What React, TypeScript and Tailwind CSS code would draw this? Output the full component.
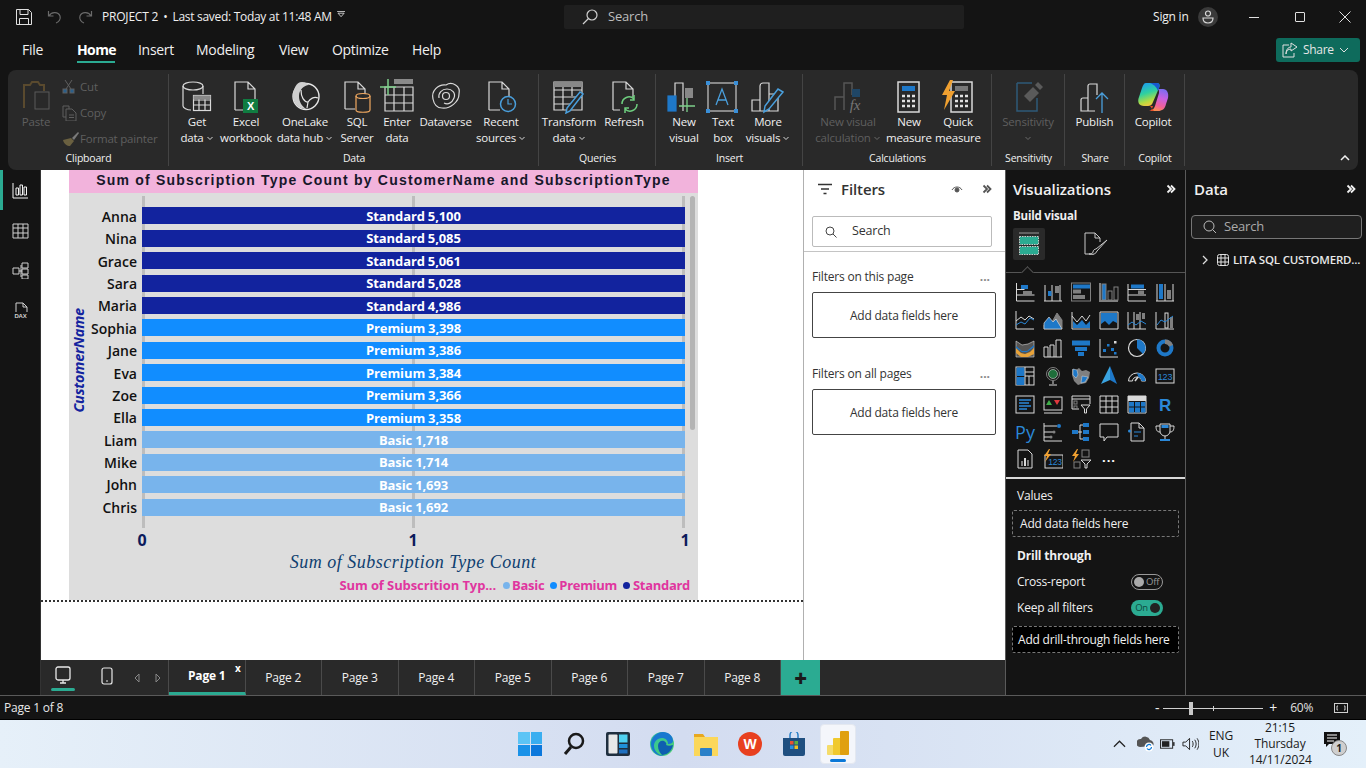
import React from "react";

const W = "#d9d9d9";
const B = "#2b88d8";
const F = "#1e78c8";
const G = "#808080";

function V({ children, className = "" }: { children?: React.ReactNode; className?: string }) {
  return (
    <svg viewBox="0 0 20 20" className={"h-5 w-5 " + className} fill="none" stroke={W} strokeWidth="1">
      {children}
    </svg>
  );
}

const viz: React.ReactNode[] = [
  <V><path d="M1.5 1v18h18M1.5 7.5h8M1.5 13h18" /><rect x="6" y="3" width="7" height="4" fill={F} stroke="none" /><rect x="8" y="9" width="9" height="4" fill={G} stroke="none" /></V>,
  <V><path d="M1 19h18M2 3v16M9 3v16M17 3v16" /><rect x="5" y="9" width="3.5" height="5" fill={F} stroke="none" /><rect x="12" y="4" width="4" height="7" fill={G} stroke="none" /></V>,
  <V><rect x="0.5" y="1" width="19" height="18" stroke={G} /><rect x="2" y="2.5" width="17" height="4" fill={F} stroke="none" /><rect x="2" y="7.5" width="8" height="4" fill={G} stroke="none" /><rect x="2" y="13" width="12" height="4" fill={G} stroke="none" /></V>,
  <V><path d="M1 1v18h18" stroke={G} strokeWidth="2" /><rect x="3" y="2" width="4" height="16" fill={F} stroke={G} /><rect x="9" y="9" width="4" height="9" stroke={G} /><rect x="15" y="5" width="4" height="13" stroke={G} /></V>,
  <V><path d="M1 2v17h18M1 7.5h18M1 13h18" /><rect x="4" y="2.5" width="13" height="4" fill={F} stroke="none" /><rect x="11" y="8.5" width="6" height="4" fill={G} stroke="none" /></V>,
  <V><path d="M1 19h18M2 2v17M10 2v17M18 2v17" /><rect x="4" y="2" width="4" height="15" fill={F} stroke="none" /><rect x="12" y="8" width="4" height="9" fill={G} stroke="none" /></V>,

  <V><path d="M1 1v18h18" /><path d="M1 11l5-4 4 3 4-4 5 3" stroke={W} /><path d="M1 15l5-3 4 2 5-6 4 2" stroke={B} /></V>,
  <V><path d="M1 15l5-6 3 3 5-9 5 7v9H1z" fill={G} stroke={G} /><path d="M1 19v-6l5-6 4 5 3-3 6 10z" fill={F} stroke={W} strokeWidth="0.7" /></V>,
  <V><path d="M1 2v17h18M1 6l5 6 5-6 4 5 4-6" stroke={W} /><path d="M2 11l4 4 5-5 4 5 4-4v7H2z" fill={F} stroke="none" /></V>,
  <V><path d="M1 2h18v17H1z" stroke={W} /><path d="M2 3h16v10l-4-2-4 4-4-4-4 3z" fill={F} stroke="none" /></V>,
  <V><path d="M1 2v17h18M7 2v17M13 2v17" /><rect x="9" y="4" width="3" height="6" fill={G} stroke="none" /><rect x="15" y="3" width="3" height="6" fill={G} stroke="none" /><path d="M1 15l4-3 4 3 5-4 5 3" stroke={B} /></V>,
  <V><path d="M1 2v17h18" /><rect x="10" y="3" width="3" height="15" stroke={W} /><rect x="15" y="7" width="3" height="11" fill={G} stroke="none" /><path d="M2 15l4-5 4 2 8-6" stroke={B} /></V>,

  <V><path d="M1 3l6 4 6-1 6-3v16H1z" fill="#555" stroke={W} strokeWidth="0.6" /><path d="M1 10l5 5 4 1 5-2 4-4v6l-6 3H6l-5-4z" fill="#e8a33a" stroke="none" /><path d="M1 8l6 5h5l7-6v2l-7 5H7L1 10z" fill={F} stroke="none" /></V>,
  <V><path d="M1 19V9h4v10M1 19h18M7 19V7h4v12M13 19V2h5v17" stroke={W} /></V>,
  <V><rect x="1" y="2.5" width="18" height="5" fill={F} stroke="none" /><rect x="4" y="9" width="12" height="4" fill={F} stroke="none" /><rect x="7" y="14" width="6" height="4" fill={F} stroke="none" /></V>,
  <V><path d="M1 1v18h18" /><rect x="4" y="11" width="3" height="3" fill={F} stroke="none" /><rect x="8" y="6" width="2.5" height="2.5" fill={F} stroke="none" /><rect x="12" y="10" width="3" height="3" fill={F} stroke="none" /><rect x="15" y="3" width="2.5" height="2.5" fill={W} stroke="none" /><rect x="15" y="14" width="2.5" height="2.5" fill={F} stroke="none" /></V>,
  <V><circle cx="10" cy="10" r="8.5" stroke={W} strokeWidth="1.2" /><path d="M10 10V1.5a8.5 8.5 0 0 1 6 14.5z" fill={F} stroke="none" /></V>,
  <V><circle cx="10" cy="10" r="6.5" stroke={F} strokeWidth="4" /><path d="M10 1.5a8.5 8.5 0 0 1 8 5.5l-4 1.5a4 4 0 0 0-4-2.5z" fill={G} stroke="none" /></V>,

  <V><rect x="1" y="1" width="18" height="18" /><rect x="1.5" y="1.5" width="8" height="8.5" fill={F} stroke="none" /><rect x="1.5" y="11" width="8" height="8" fill={F} stroke="none" /><path d="M10 1v18M14 10v9M10 6h9M10 10h9" /></V>,
  <V><circle cx="10" cy="8" r="6.5" stroke={G} /><circle cx="10" cy="8" r="4.5" fill="#1e6e3a" stroke={W} strokeWidth="0.6" /><path d="M10 15v3M6 19h8" /></V>,
  <V><path d="M1 3l4 1 3-2 3 3 4-1 4 2-1 6-3 5-5 1-3 1-4-4-2-6z" fill={G} stroke="none" /><path d="M2 3l4 1 1 5-2 3-3-3z M11 10l6 1-3 5-4 1z" fill={F} stroke={W} strokeWidth="0.5" /></V>,
  <svg viewBox="0 0 20 20" className="h-5 w-5"><path d="M11 0l7 18-7-4z" fill="#1e78c8" /><path d="M11 0v14l-9 4z" fill="#3aa3e0" /></svg>,
  <V><path d="M1.5 15a8.5 8 0 0 1 17 0h-4a4.5 4 0 0 0-9 0z" stroke={W} /><path d="M10 7a8.5 8 0 0 1 8.5 8h-4a4.5 4 0 0 0-3-3.7z" fill={F} stroke="none" /><path d="M8 15l3-4" strokeWidth="1.5" /></V>,
  <V><rect x="1" y="3" width="18" height="14" /><text x="10" y="14" textAnchor="middle" fontSize="9" fill={B} stroke="none" fontFamily="Liberation Sans">123</text></V>,

  <V><rect x="1" y="2" width="18" height="17" /><path d="M4 6h12M4 9h10M4 12h12M4 15h8" stroke={B} strokeWidth="1.3" /></V>,
  <V><rect x="1" y="3" width="18" height="13" /><path d="M1 19h18" /><path d="M6 6l3 5H3z" fill="#3fae49" stroke="none" /><path d="M11 6h6l-3 5z" fill="#e0393e" stroke="none" /></V>,
  <V><path d="M1 15V2h18v8M1 5h18M1 15h7" /><rect x="3" y="7" width="3" height="3" stroke={G} /><rect x="3" y="12" width="3" height="3" stroke={G} /><path d="M10 11h9l-3.5 4v4h-2v-4z" fill="#141414" /></V>,
  <V><path d="M1 2h18v17H1zM1 7h18M1 13h18M7 2v17M13 2v17" stroke={W} /></V>,
  <V><path d="M1 2h18v17H1z" stroke={W} /><path d="M1 2h18v5H1z" fill={W} stroke="none" /><rect x="2" y="8" width="5" height="4.5" fill={F} stroke="none" /><rect x="8" y="8" width="5" height="4.5" fill={F} stroke="none" /><rect x="14" y="8" width="4.5" height="4.5" fill={F} stroke="none" /><rect x="2" y="13.500" width="5" height="5" fill={F} stroke="none" /><rect x="8" y="13.500" width="5" height="5" fill={F} stroke="none" /><rect x="14" y="13.500" width="4.500" height="5" fill={F} stroke="none" /></V>,
  <V><text x="10" y="17" textAnchor="middle" fontSize="17" fontWeight="700" fill={B} stroke="none" fontFamily="Liberation Sans">R</text></V>,

  <div className="text-[18px] leading-none text-[#2b88d8] tracking-[0px] -mt-[1px]">Py</div>,
  <V><path d="M1 1v18h18M1 4h13M1 10h9M1 15h6" /><circle cx="16" cy="4" r="2" fill={F} stroke="none" /><circle cx="11" cy="10" r="1.5" fill={G} stroke="none" /><circle cx="8" cy="15" r="1.500" fill={G} stroke="none" /></V>,
  <V><rect x="1" y="8" width="6" height="4" fill={F} stroke="none" /><path d="M7 10h4M9 3v14M9 3h3M9 17h3" stroke={W} /><rect x="12" y="1" width="6" height="4" fill={F} stroke="none" /><rect x="12" y="8" width="6" height="4" fill={F} stroke="none" /><rect x="12" y="15" width="6" height="4" fill={F} stroke="none" /></V>,
  <V><path d="M1 2h18v13H8l-3 4v-4H1z" stroke={W} /></V>,
  <V><path d="M4 1h8l5 5v13H4z" stroke={W} /><path d="M12 1v5h5" /><circle cx="2.500" cy="9" r="1.500" fill={B} stroke="none" /><path d="M7 10h7M7 14h4" stroke={B} /></V>,
  <V><path d="M5 2h10v7a5 5 0 0 1-10 0z" stroke={W} /><path d="M5 4H1c0 4 1 6 4 6M15 4h4c0 4-1 6-4 6M10 14v3" /><rect x="5" y="17" width="10" height="2" fill={B} stroke="none" /><rect x="6.500" y="3" width="7" height="3" fill={B} stroke="none" /></V>,

  <V><path d="M3 1h10l4 4v14H3z" stroke={W} /><rect x="6" y="12" width="2" height="5" fill={G} stroke="none" /><rect x="9" y="9" width="2" height="8" fill={W} stroke="none" /><rect x="12" y="11" width="2" height="6" fill={G} stroke="none" /></V>,
  <V><rect x="2" y="6" width="18" height="13" /><text x="12" y="16" textAnchor="middle" fontSize="8.500" fill={B} stroke="none" fontFamily="Liberation Sans">123</text><path d="M6 0L1 7h3l-2 6 6-8H5l2-5z" fill="#f0a030" stroke="none" /></V>,
  <V><path d="M6 0L1 7h3l-2 6 6-8H5l2-5z" fill="#f0a030" stroke="none" /><rect x="11" y="1" width="7" height="7" stroke={G} /><rect x="3" y="13" width="6" height="6" stroke={G} /><path d="M10 11h10l-4 4v4h-2v-4z" stroke={W} /></V>,
  <div className="text-[13px] leading-none font-bold text-white tracking-[1px] pb-1">...</div>,
];

function Ic({ children, className = "h-[34px] w-[34px]" }: { children?: React.ReactNode; className?: string }) {
  return (
    <svg viewBox="0 0 34 34" className={className} fill="none" stroke="#d9d9d9" strokeWidth="1.2">
      {children}
    </svg>
  );
}

const Bars = ({ c = "#d9d9d9" }: { c?: string }) => <path d="M1 31V20h8v11zM9 31V6a3 3 0 0 1 3-3h6v28M18 14h9v17H1" stroke={c} />;

function Rb({ w, icon, a, b, caret, dim }: { w: string; icon: React.ReactNode; a: string; b?: string; caret?: boolean; dim?: boolean }) {
  return (
    <div className={"flex flex-col items-center shrink-0 " + w}>
      <div className="h-[35px] flex items-start justify-center pt-[1px]">{icon}</div>
      <div className={"h-[16px] leading-[16px] whitespace-nowrap " + (dim ? "text-[#5f5f5f]" : "text-[#f0f0f0]")}>{a}</div>
      <div className={"h-[16px] leading-[16px] whitespace-nowrap flex items-center gap-[2px] " + (dim ? "text-[#5f5f5f]" : "text-[#f0f0f0]")}>
        {b}
        {caret && (
          <svg viewBox="0 0 8 5" className="h-[5px] w-[8px]" fill="none" stroke={dim ? "#6a6a6a" : "#d9d9d9"}>
            <path d="M1.500 1l2.500 2.500L6.500 1" />
          </svg>
        )}
      </div>
    </div>
  );
}

function Group({ w, name, children, pl = "pl-0" }: { w: string; name: string; children: React.ReactNode; pl?: string }) {
  return (
    <div className={"relative flex flex-col shrink-0 h-full " + w}>
      <div className={"flex h-[80px] pt-[9px] " + pl}>{children}</div>
      <div className="text-center text-[10.5px] leading-[14px] text-[#f0f0f0] mt-[1px]">{name}</div>
      <div className="absolute right-0 top-[4px] bottom-[4px] w-px bg-[#444]" />
    </div>
  );
}

const rows: [string, string, string, string][] = [
  ["Anna", "Standard", "5,100", "bg-[#12239e]"],
  ["Nina", "Standard", "5,085", "bg-[#12239e]"],
  ["Grace", "Standard", "5,061", "bg-[#12239e]"],
  ["Sara", "Standard", "5,028", "bg-[#12239e]"],
  ["Maria", "Standard", "4,986", "bg-[#12239e]"],
  ["Sophia", "Premium", "3,398", "bg-[#118dff]"],
  ["Jane", "Premium", "3,386", "bg-[#118dff]"],
  ["Eva", "Premium", "3,384", "bg-[#118dff]"],
  ["Zoe", "Premium", "3,366", "bg-[#118dff]"],
  ["Ella", "Premium", "3,358", "bg-[#118dff]"],
  ["Liam", "Basic", "1,718", "bg-[#78b4ec]"],
  ["Mike", "Basic", "1,714", "bg-[#78b4ec]"],
  ["John", "Basic", "1,693", "bg-[#78b4ec]"],
  ["Chris", "Basic", "1,692", "bg-[#78b4ec]"],
];

function Chevrons({ c }: { c: string }) {
  return (
    <svg viewBox="0 0 10 10" className="h-[10px] w-[10px]" fill="none" stroke={c} strokeWidth="1.8">
      <path d="M1.500 1.500L5 5 1.500 8.500M5 1.500L8.500 5 5 8.500" />
    </svg>
  );
}

function Chart() {
  return (
    <div className="ml-[28px] w-[629px] h-[430px] bg-[#dddddd] flex flex-col shrink-0 relative">
      <div className="h-[23px] bg-[#f2b3dc] text-center font-['Liberation_Sans'] font-bold text-[14px] leading-[21px] tracking-[1.2px] text-[#17172a] whitespace-nowrap">
        Sum of Subscription Type Count by CustomerName and SubscriptionType
      </div>
      <div className="flex h-[335px]">
        <div className="w-[19px] flex items-center justify-center">
          <span className="[writing-mode:vertical-rl] rotate-180 font-bold italic text-[14.5px] text-[#12239e] whitespace-nowrap">CustomerName</span>
        </div>
        <div className="w-[49px] pt-[11.800px]">
          {rows.map((r) => (
            <div key={r[0]} className="h-[22.400px] pt-[1px] text-right text-[14px] leading-[22.400px] font-semibold text-[#111] tracking-[0px]">{r[0]}</div>
          ))}
        </div>
        <div className="w-[5px]" />
        <div className="relative w-[543px] pt-[11.800px]">
          <div className="absolute left-0 top-[3px] bottom-0 w-[3px] bg-[#bdbdbd]" />
          <div className="absolute left-[270px] top-[3px] bottom-0 w-[3px] bg-[#bdbdbd]" />
          <div className="absolute right-0 top-[3px] bottom-0 w-[3px] bg-[#bdbdbd]" />
          {rows.map((r) => (
            <div key={r[0]} className="h-[22.400px] flex items-center relative">
              <div className={"h-[17px] w-full pt-[1px] flex items-center justify-center gap-[3px] text-white text-[13px] font-bold leading-none tracking-[-0.1px] " + r[3]}>
                <span>{r[1]}</span>
                <span>{r[2]}</span>
              </div>
            </div>
          ))}
        </div>
        <div className="ml-[5px] mt-[3px] w-[5px] h-[234px] rounded-full bg-[#b4b4b4]" />
      </div>
      <div className="flex w-[629px] pl-[68px] h-[24px] text-[#0b1a5c] font-bold text-[16px] leading-[24px]">
        <span className="w-[10px] text-center">0</span>
        <span className="w-[10px] text-center ml-[261px]">1</span>
        <span className="w-[10px] text-center ml-[262px]">1</span>
      </div>
      <div className="text-center w-[688px] font-['Liberation_Serif'] italic text-[18px] leading-[22px] text-[#0f3f70] mt-[-1px] whitespace-nowrap tracking-[0.5px]">
        Sum of Subscription Type Count
      </div>
      <div className="mt-[2px] pr-[8px] flex justify-end items-center text-[#e0359f] text-[13px] font-bold leading-[20px] whitespace-nowrap tracking-[-0.3px]">
        <span className="mr-[6.500px] tracking-[-0.1px]">Sum of Subscrition Typ...</span>
        <span className="h-[7px] w-[7px] rounded-full bg-[#78b4ec] mr-[2.500px]" />
        <span className="mr-[5.500px]">Basic</span>
        <span className="h-[7px] w-[7px] rounded-full bg-[#118dff] mr-[2.500px]" />
        <span className="mr-[6.500px]">Premium</span>
        <span className="h-[7px] w-[7px] rounded-full bg-[#12239e] mr-[2.500px]" />
        <span>Standard</span>
      </div>
    </div>
  );
}

const pages = ["Page 1", "Page 2", "Page 3", "Page 4", "Page 5", "Page 6", "Page 7", "Page 8"];

function DashBox({ children, black }: { children: React.ReactNode; black?: boolean }) {
  return (
    <div className={"mx-[6px] w-[167px] h-[27px] border border-dashed border-[#777] rounded-[2px] flex items-center text-[12px] text-[#f0f0f0] whitespace-nowrap " + (black ? "bg-black pl-[5px]" : "pl-[7px]")}>
      {children}
    </div>
  );
}

export default function App() {
  return (
    <div className="w-[1366px] h-[768px] overflow-hidden flex flex-col bg-[#141414] text-[#f0f0f0] font-['Open_Sans',sans-serif] text-[11.500px] tracking-[-0.2px]">
      {/* Title bar */}
      <div className="h-[34px] flex items-center shrink-0">
        <svg viewBox="0 0 16 16" className="ml-[16px] h-[16px] w-[16px]" fill="none" stroke="#e0e0e0">
          <path d="M.5.500h12l3 3v12H.5zM4 .5v5h8v-5M3.500 15.500v-6h9v6" />
        </svg>
        <svg viewBox="0 0 16 16" className="ml-[15px] h-[16px] w-[16px]" fill="none" stroke="#6a6a6a" strokeWidth="1.200">
          <path d="M1.500 2v5h5M2 7c2-4 9-5 11 0 1 3-1 6-4 7" />
        </svg>
        <svg viewBox="0 0 16 16" className="ml-[14px] h-[16px] w-[16px]" fill="none" stroke="#6a6a6a" strokeWidth="1.200">
          <path d="M14.500 2v5h-5M14 7c-2-4-9-5-11 0-1 3 1 6 4 7" />
        </svg>
        <span className="ml-[9px] text-[12px] whitespace-nowrap text-[#f0f0f0] w-[228px] flex">
          <span>PROJECT 2</span>
          <span className="ml-[5px]">•</span>
          <span className="ml-[5px] tracking-[-0.3px]">Last saved: Today at 11:48 AM</span>
        </span>
        <svg viewBox="0 0 10 8" className="ml-[7px] h-[7px] w-[9px] mb-[5px]" fill="none" stroke="#d9d9d9">
          <path d="M0 .5h9M1 2.500l3.500 4 3.500-4z" />
        </svg>
        <div className="ml-[218px] w-[400px] h-[24px] bg-[#1f1f1f] rounded-[2px] flex items-center pl-[18px] text-[#bdbdbd] text-[13px]">
          <svg viewBox="0 0 16 16" className="h-[16px] w-[16px]" fill="none" stroke="#d0d0d0" strokeWidth="1.200">
            <circle cx="10" cy="6" r="5" />
            <path d="M6.500 9.500L1 15" />
          </svg>
          <span className="ml-[10px]">Search</span>
        </div>
        <span className="ml-[189px] text-[12px] text-[#f0f0f0]">Sign in</span>
        <div className="ml-[9px] h-[20px] w-[20px] rounded-full bg-[#3a3a3a] flex items-center justify-center">
          <svg viewBox="0 0 14 14" className="h-[16px] w-[14px]" fill="none" stroke="#d9d9d9" strokeWidth="1.200">
            <circle cx="7" cy="3.500" r="2.500" />
            <path d="M2 8h10c0 3-2 5-5 5S2 11 2 8z" />
          </svg>
        </div>
        <div className="ml-[31px] h-px w-[10px] bg-[#e0e0e0]" />
        <div className="ml-[36px] h-[10px] w-[10px] border border-[#e0e0e0] rounded-[1px]" />
        <svg viewBox="0 0 12 12" className="ml-[34px] h-[12px] w-[12px]" stroke="#e0e0e0">
          <path d="M.5.500l11 11M11.500.5l-11 11" />
        </svg>
      </div>

      {/* Menu */}
      <div className="h-[36px] flex items-start shrink-0 text-[14px] tracking-[-0.3px] relative">
        <span className="ml-[22px] w-[22px] mt-[5px]">File</span>
        <span className="ml-[33px] w-[38px] h-[29px] pt-[5px] border-b-2 border-[#2bab92] font-bold text-white whitespace-nowrap tracking-[-0.6px]">Home</span>
        <span className="ml-[23px] w-[35px] mt-[5px]">Insert</span>
        <span className="ml-[23px] w-[60px] mt-[5px]">Modeling</span>
        <span className="ml-[23px] w-[30px] mt-[5px]">View</span>
        <span className="ml-[23px] w-[57px] mt-[5px]">Optimize</span>
        <span className="ml-[23px] w-[30px] mt-[5px]">Help</span>
        <div className="ml-[834px] mt-[4px] w-[84px] h-[24px] rounded-[3px] bg-[#0e6b5c] flex items-center pl-[6px] text-[12px] text-[#e6e6e6]">
          <svg viewBox="0 0 16 16" className="h-[16px] w-[16px]" fill="none" stroke="#e0e0e0">
            <path d="M7 3H1v12h11v-4M9 1l6 4-6 4V7C6 7 4 9 4 12c0-4 2-7 5-7z" />
          </svg>
          <span className="ml-[5px]">Share</span>
          <svg viewBox="0 0 10 6" className="ml-[5px] h-[6px] w-[10px]" fill="none" stroke="#e0e0e0">
            <path d="M1 1l4 4 4-4" />
          </svg>
        </div>
      </div>

      {/* Ribbon */}
      <div className="mx-[8px] h-[100px] rounded-[8px] bg-[#292929] flex shrink-0 relative">
        <Group w="w-[161px]" name="Clipboard">
          <div className="w-[56px] -mr-[2px] flex flex-col items-center">
            <div className="h-[35px] pt-[1px]">
              <svg viewBox="0 0 30 30" className="h-[30px] w-[30px]" fill="none">
                <path d="M3 28V5h6l2-3h6l2 3h4v6" stroke="#5a4a2e" strokeWidth="2" />
                <rect x="14" y="12" width="14" height="17" stroke="#5a5a5a" />
              </svg>
            </div>
            <div className="text-[#5f5f5f] leading-[16px]">Paste</div>
          </div>
          <div className="flex flex-col text-[#5f5f5f] gap-[6px] -mt-[2px]">
            <div className="flex items-center h-[20px]">
              <svg viewBox="0 0 14 16" className="h-[16px] w-[14px]" fill="none" stroke="#5f5f5f">
                <path d="M3 1l6 9M10 1L4 10" />
                <rect x="1" y="10" width="4" height="4" fill="#2b5f8a" />
                <rect x="8" y="10" width="4" height="4" fill="#2b5f8a" />
              </svg>
              <span className="ml-[4px]">Cut</span>
            </div>
            <div className="flex items-center h-[20px]">
              <svg viewBox="0 0 16 16" className="h-[16px] w-[16px]" fill="none" stroke="#5f5f5f">
                <path d="M4 12H1V1h6v3M4 4h6l4 4v8H4zM7 10h5M7 12.500h5" />
              </svg>
              <span className="ml-[2px]">Copy</span>
            </div>
            <div className="flex items-center h-[20px] whitespace-nowrap">
              <svg viewBox="0 0 18 16" className="h-[16px] w-[18px]" fill="none">
                <path d="M1 9l8-2 3 3-4 5c-3 0-6-2-7-6z" fill="#6a6040" />
                <path d="M10 7l6-6 1 1-5 7z" fill="#7a7a7a" />
              </svg>
              <span>Format painter</span>
            </div>
          </div>
        </Group>
        <Group w="w-[370px]" name="Data" pl="pl-[3px]">
          <Rb w="w-[50px]" a="Get" b="data" caret icon={<Ic><ellipse cx="13" cy="6" rx="10" ry="4" /><path d="M3 6v20c0 2 4 4 8 4M23 6v8" /><rect x="13.500" y="15.500" width="17" height="15" fill="#292929" /><path d="M13.500 20h17M13.500 25h17M19 15.500v15M25 15.500v15" /><rect x="13.500" y="15.500" width="17" height="4" fill="#888" stroke="none" /></Ic>} />
          <Rb w="w-[48px]" a="Excel" b="workbook" icon={<Ic><path d="M6 30V2h13l7 7v11M19 2v7h7M6 30h8" /><rect x="14" y="19" width="15" height="14" fill="#107c41" stroke="none" /><text x="21.500" y="30" textAnchor="middle" fontSize="11" fontWeight="700" fill="#fff" stroke="none" fontFamily="Liberation Sans">X</text></Ic>} />
          <Rb w="w-[70px]" a="OneLake" b="data hub" caret icon={<Ic><circle cx="18" cy="16.500" r="13" stroke="#e6e6e6" strokeWidth="1.400" /><path d="M5 16C5 10 8 2 14 2c4 0 6 2 7 3-5 0-10 5-10 11 0 6 3 10 7 13-7 0-13-6-13-13z" fill="#cfcfcf" stroke="none" /><path d="M13 10c0 7 3 12 7 12 2-3 6-6 10-4M20 22l-1 6" stroke="#e6e6e6" /></Ic>} />
          <Rb w="w-[34px]" a="SQL" b="Server" icon={<Ic><path d="M5 29V2h13l7 7v5M18 2v7h7M5 29h10" /><ellipse cx="23" cy="16" rx="7" ry="2.500" stroke="#f0a860" /><path d="M16 16v14c0 3 14 3 14 0V16" stroke="#f0a860" /></Ic>} />
          <Rb w="w-[46px]" a="Enter" b="data" icon={<Ic className="h-[34px] w-[34px] -mt-[2px]"><path d="M5 9h28v24H5zM5 17h28M5 25h28M14 9v24M24 9v24" /><rect x="14" y="1" width="19" height="5" fill="#8a8a8a" stroke="none" /><path d="M0 9h16M8 1v16" stroke="#7dd08a" strokeWidth="1.500" /></Ic>} />
          <Rb w="w-[51px]" a="Dataverse" icon={<Ic><path d="M4 19C2 11 9 4 17 5c6-4 15 1 13 9 0 8-9 15-17 14C8 28 5 24 4 19z" /><path d="M10 18c-1-5 3-9 8-9s9 4 7 9-6 7-10 5" /><circle cx="17" cy="16" r="3.500" /></Ic>} />
          <Rb w="w-[60px]" a="Recent" b="sources" caret icon={<Ic><path d="M5 30V2h13l7 7v8M18 2v7h7M5 30h11" /><circle cx="24" cy="24" r="7.500" stroke="#4a9fdc" strokeWidth="1.500" /><path d="M24 19v5h4" stroke="#4a9fdc" /></Ic>} />
        </Group>
        <Group w="w-[117px]" name="Queries" pl="pl-[6px]">
          <Rb w="w-[48px]" a="Transform" b="data" caret icon={<Ic><path d="M2 2h28v28H2zM2 10h28M2 17h28M2 24h16M11 2v28M20 2v14" /><rect x="2" y="2" width="28" height="5" fill="#888" stroke="none" /><path d="M31 14L18 31l-4 2 1-5L28 12z" fill="#292929" stroke="#4a9fdc" strokeWidth="1.500" /></Ic>} />
          <Rb w="w-[62px]" a="Refresh" icon={<Ic><path d="M6 30V2h13l7 7v8M19 2v7h7M6 30h7" /><path d="M15 24a7 7 0 0 1 12-5M30 24a7 7 0 0 1-12 5M27 15v5h-4M18 33v-5h4" stroke="#6fcf7f" strokeWidth="1.500" /></Ic>} />
        </Group>
        <Group w="w-[147px]" name="Insert" pl="pl-[3px]">
          <Rb w="w-[50px]" a="New" b="visual" icon={<Ic><path d="M8 30V3h8v28" /><rect x="1" y="16" width="8" height="15" fill="#1e78c8" stroke="#1e78c8" /><rect x="18" y="8" width="8" height="10" fill="#888" stroke="none" /><path d="M12 26h16M20 18v14" stroke="#7dd08a" strokeWidth="1.300" /></Ic>} />
          <Rb w="w-[28px]" a="Text" b="box" icon={<Ic><rect x="2" y="3" width="28" height="28" stroke="#c8c8c8" /><rect x="0" y="1" width="4" height="4" fill="#3a8fd8" stroke="none" /><rect x="28" y="1" width="4" height="4" fill="#3a8fd8" stroke="none" /><rect x="0" y="29" width="4" height="4" fill="#3a8fd8" stroke="none" /><rect x="28" y="29" width="4" height="4" fill="#3a8fd8" stroke="none" /><path d="M10 25l6-16 6 16M12 20h8" stroke="#4a9fdc" strokeWidth="1.300" /></Ic>} />
          <Rb w="w-[62px]" a="More" b="visuals" caret icon={<Ic><Bars /><path d="M32 12L18 29l-5 3 1-6L27 9z" fill="#292929" stroke="#4a9fdc" strokeWidth="1.500" /></Ic>} />
        </Group>
        <Group w="w-[189px]" name="Calculations" pl="pl-[7px]">
          <Rb w="w-[76px]" dim a="New visual" b="calculation" caret icon={<Ic><path d="M13 30V3h8v12M4 30V17h9" stroke="#555" strokeWidth="1.500" /><rect x="21" y="9" width="8" height="8" fill="#1f4666" stroke="none" /><text x="24" y="30" textAnchor="middle" fontSize="15" fontStyle="italic" fill="#777" stroke="none" fontFamily="Liberation Serif">fx</text></Ic>} />
          <Rb w="w-[46px]" a="New" b="measure" icon={<Ic><rect x="6" y="2" width="21" height="30" strokeWidth="1.500" /><rect x="10" y="6" width="13" height="5" fill="#1e78c8" stroke="none" /><path d="M10 16h3M15 16h3M20 16h3M10 21h3M15 21h3M20 21h3M10 26h3M15 26h3M20 26h3" strokeWidth="2.500" stroke="#e0e0e0" /></Ic>} />
          <Rb w="w-[52px]" a="Quick" b="measure" icon={<Ic><rect x="10" y="2" width="21" height="30" strokeWidth="1.500" /><rect x="14" y="6" width="13" height="5" fill="#777" stroke="none" /><path d="M14 16h3M19 16h3M24 16h3M14 21h3M19 21h3M24 21h3M14 26h3M19 26h3M24 26h3" strokeWidth="2.500" stroke="#e0e0e0" /><path d="M9 0L1 15h5l-3 15L14 11H8l4-11z" fill="#f0a030" stroke="none" /></Ic>} />
        </Group>
        <Group w="w-[73px]" name="Sensitivity">
          <Rb w="w-[72px]" dim a="Sensitivity" caret icon={<Ic><path d="M6 3h15M6 3v28h20V18" stroke="#2e5a78" strokeWidth="1.500" /><path d="M13 16l9-9 6 6-9 9z" fill="#5a5a5a" stroke="none" /><path d="M24 5l3-3 5 5-3 3z" fill="#5a5a5a" stroke="none" /></Ic>} />
        </Group>
        <Group w="w-[60px]" name="Share">
          <Rb w="w-[59px]" a="Publish" icon={<Ic><path d="M3 31V20a2 2 0 0 1 2-2h5v13zM10 31V6a2 2 0 0 1 2-2h7v11M3 31h14" /><path d="M24 33V13M18 19l6-6 6 6" stroke="#4a9fdc" strokeWidth="1.300" /></Ic>} />
        </Group>
        <Group w="w-[60px]" name="Copilot">
          <Rb w="w-[56px]" a="Copilot" icon={
            <svg viewBox="0 0 34 34" className="h-[34px] w-[34px]">
              <defs>
                <linearGradient id="cp1" x1="0.200" y1="0" x2="0.500" y2="1"><stop offset="0" stopColor="#1c9bf0" /><stop offset="0.450" stopColor="#2fd0a0" /><stop offset="0.800" stopColor="#b6dc40" /><stop offset="1" stopColor="#f5c542" /></linearGradient>
                <linearGradient id="cp2" x1="0.700" y1="0" x2="0.400" y2="1"><stop offset="0" stopColor="#7a6cf0" /><stop offset="0.400" stopColor="#c860e0" /><stop offset="0.750" stopColor="#f0609a" /><stop offset="1" stopColor="#f89050" /></linearGradient>
              </defs>
              <path d="M10 3h11c3 0 3 3 2 5l-6 14c-1 3-3 4-5 4H8c-5 0-7-4-5-9L6 8c1-3 2-5 4-5z" fill="url(#cp1)" />
              <path d="M14 3h7c3 0 3 3 2 5l-1 3c-1-3-3-6-8-8z" fill="#1858d0" />
              <path d="M22 9h5c4 0 6 4 5 9l-2 6c-1 5-4 7-8 7h-9c3 0 5-2 6-5l4-13c0-2 0-4-1-4z" fill="url(#cp2)" />
              <path d="M14 26l4 5h-5c2 0 3-2 4-5z" fill="#e8502a" />
            </svg>
          } />
        </Group>
        <div className="flex-1 relative">
          <svg viewBox="0 0 10 6" className="absolute right-[8px] bottom-[9px] h-[6px] w-[10px]" fill="none" stroke="#f0f0f0" strokeWidth="1.500">
            <path d="M1 5l4-4 4 4" />
          </svg>
        </div>
      </div>

      {/* Main */}
      <div className="flex h-[525px] shrink-0">
        {/* Rail */}
        <div className="w-[41px] shrink-0 flex flex-col relative border-r border-[#333]">
          <div className="absolute left-0 top-0 w-[3px] h-[40px] bg-[#2bab92]" />
          {[
            <path key="a" d="M1 1v15h15M4 13V6h2.500v7zM8 13V3h2.500v10zM12 13V5h2.500v8z" />,
            <path key="b" d="M1 2h15v14H1zM1 6h15M1 11h15M6 2v14M11 2v14" />,
            <path key="c" d="M1 6h6v6H1zM10 1h6v5h-6zM10 7h6v5h-6zM10 13h6v4h-6zM7 9h3M9 3v12" />,
            <path key="d" d="M4 10V1h7l4 4v5M11 1v4h4" />,
          ].map((p, i) => (
            <div key={i} className="h-[40px] flex items-center justify-center relative">
              <svg viewBox="0 0 17 17" className="h-[17px] w-[17px]" fill="none" stroke={i === 0 ? "#f5f5f5" : "#d0d0d0"}>
                {p}
                {i === 3 && <text x="8.500" y="16" textAnchor="middle" fontSize="6" fontWeight="700" fill="#d0d0d0" stroke="none" fontFamily="Liberation Sans">DAX</text>}
              </svg>
            </div>
          ))}
        </div>

        {/* Canvas + tabs */}
        <div className="flex-col flex w-[964px] shrink-0">
          <div className="flex h-[490px]">
            <div className="w-[762px] bg-white flex flex-col">
              <Chart />
              <div className="border-t-2 border-dotted border-[#333] w-full" />
            </div>
            <div className="w-[202px] bg-white border-l border-[#b0b0b0] text-[#333] flex flex-col">
              <div className="h-[38px] flex items-center relative">
                <svg viewBox="0 0 14 12" className="ml-[14px] h-[12px] w-[14px]" fill="none" stroke="#333">
                  <path d="M0 1.500h14M3 6h8M5.500 10.500h3" strokeWidth="1.300" />
                </svg>
                <span className="ml-[9px] w-[44px] text-[15px] font-semibold text-[#333] tracking-[-0.1px]">Filters</span>
                <svg viewBox="0 0 12 8" className="ml-[66px] h-[8px] w-[12px]" fill="none" stroke="#555">
                  <path d="M1 5c2-4 8-4 10 0" />
                  <circle cx="6" cy="5" r="2" fill="#555" />
                </svg>
                <span className="ml-[19px]"><Chevrons c="#555" /></span>
              </div>
              <div className="ml-[8px] mt-[8px] w-[180px] h-[31px] border border-[#bbb] rounded-[2px] flex items-center pl-[12px] text-[12.500px]">
                <svg viewBox="0 0 12 12" className="h-[12px] w-[12px]" fill="none" stroke="#444">
                  <circle cx="5" cy="5" r="4" />
                  <path d="M8 8l3.500 3.500" />
                </svg>
                <span className="ml-[15px]">Search</span>
              </div>
              <div className="mt-[4px] border-t border-[#c4c4c4]" />
              <div className="ml-[8px] mt-[17px] w-[184px] flex justify-between h-[16px] items-center text-[12px]">
                <span>Filters on this page</span>
                <span className="font-bold text-[#888] mr-[6px] tracking-[0px]">...</span>
              </div>
              <div className="ml-[8px] mt-[7px] w-[184px] h-[46px] pt-[1px] border border-[#444] rounded-[2px] flex items-center justify-center text-[12px]">Add data fields here</div>
              <div className="ml-[8px] mt-[28px] w-[184px] flex justify-between h-[16px] items-center text-[12px]">
                <span>Filters on all pages</span>
                <span className="font-bold text-[#888] mr-[6px] tracking-[0px]">...</span>
              </div>
              <div className="ml-[8px] mt-[7px] w-[184px] h-[46px] pt-[1px] border border-[#444] rounded-[2px] flex items-center justify-center text-[12px]">Add data fields here</div>
            </div>
          </div>
          {/* tabs */}
          <div className="h-[35px] bg-[#292929] flex text-[12px] text-[#f0f0f0]">
            <div className="w-[128px] shrink-0 flex items-center border-r border-[#4a4a4a]">
              <div className="ml-[12px] flex flex-col items-center w-[20px]">
                <svg viewBox="0 0 18 20" className="h-[20px] w-[18px] mt-[2px]" fill="none" stroke="#e8e8e8" strokeWidth="1.300">
                  <rect x="2" y="1" width="14" height="13" rx="2" />
                  <path d="M6 17h6M9 14v3" />
                </svg>
                <div className="mt-[2px] h-[3px] w-[24px] rounded-sm bg-[#2bab92]" />
              </div>
              <svg viewBox="0 0 12 18" className="ml-[28px] h-[18px] w-[12px] -mt-[4px]" fill="none" stroke="#e8e8e8" strokeWidth="1.200">
                <rect x="1" y="1" width="10" height="16" rx="2" />
                <path d="M5 14h2" />
              </svg>
              <svg viewBox="0 0 6 10" className="ml-[21px] h-[10px] w-[6px]" fill="none" stroke="#888">
                <path d="M5 1L1 5l4 4z" />
              </svg>
              <svg viewBox="0 0 6 10" className="ml-[15px] h-[10px] w-[6px]" fill="none" stroke="#888">
                <path d="M1 1l4 4-4 4z" />
              </svg>
            </div>
            {pages.map((p, i) => (
              <div key={p} className={"w-[76.500px] shrink-0 relative flex items-center justify-center border-r border-[#4a4a4a] " + (i === 0 ? "font-bold border-b-[3px] border-b-[#2bab92] text-white" : "")}>
                {p}
                {i === 0 && <span className="absolute right-[4px] top-[2px] text-[10px] leading-[12px]">x</span>}
              </div>
            ))}
            <div className="w-[39px] bg-[#2bab92] flex items-center justify-center text-[#1a1a1a] text-[22px] font-extrabold leading-none">+</div>
          </div>
        </div>

        {/* Visualizations */}
        <div className="w-[181px] shrink-0 border-l border-[#5a5a5a] border-r flex flex-col">
          <div className="h-[38px] flex items-center justify-between pl-[7px] pr-[9px]">
            <span className="text-[15px] font-semibold tracking-[-0.1px]">Visualizations</span>
            <Chevrons c="#f0f0f0" />
          </div>
          <div className="pl-[7px] text-[11.500px] font-bold leading-[16px]">Build visual</div>
          <div className="flex items-center mt-[4px] relative">
            <div className="ml-[7px] h-[32px] w-[32px] bg-[#2a2a2a] rounded-[2px] flex items-center justify-center">
              <svg viewBox="0 0 26 26" className="h-[26px] w-[26px]" fill="none">
                <path d="M3 2h20" stroke="#999" />
                <rect x="3.500" y="5.500" width="19" height="8" fill="#2bab92" stroke="#ccc" strokeDasharray="1.500 1" />
                <rect x="3.500" y="15.500" width="19" height="8" fill="#2bab92" stroke="#ccc" strokeDasharray="1.500 1" />
              </svg>
            </div>
            <svg viewBox="0 0 26 26" className="ml-[37px] h-[26px] w-[26px]" fill="none" stroke="#c8c8c8">
              <path d="M12 23H3V2h10l5 5v4M13 2v5h5" />
              <path d="M25 9L14 18c-1 0-3 1-3 3 0 1-2 2-4 2 4 1 7 0 8-3z" fill="#141414" />
            </svg>
          </div>
          <div className="relative mt-[12px] border-t border-[#555]">
            <div className="absolute left-[17px] -top-[5px] h-[9px] w-[9px] rotate-45 bg-[#141414] border-l border-t border-[#555]" />
          </div>
          <div className="grid grid-cols-[repeat(6,28px)] auto-rows-[28px] ml-[5px] mt-[5px] h-[192px] content-start">
            {viz.map((n, i) => (
              <div key={i} className={"flex items-center justify-center h-[28px] " + (i > 35 ? "-mt-[1px]" : "")}>{n}</div>
            ))}
          </div>
          <div className="mt-[7px] h-[2px] bg-[#d8d8d8]" />
          <div className="pl-[11px] mt-[9px] text-[12px] leading-[16px]">Values</div>
          <div className="mt-[6px]"><DashBox>Add data fields here</DashBox></div>
          <div className="pl-[11px] mt-[11px] text-[12px] leading-[16px] font-bold">Drill through</div>
          <div className="flex items-center pl-[11px] h-[16px] mt-[10px] text-[12px] relative">
            <span className="w-[114px]">Cross-report</span>
            <div className="h-[16px] w-[32px] rounded-full border border-[#999] flex items-center pl-[2px] text-[9.500px] text-[#999]">
              <span className="h-[10px] w-[10px] rounded-full bg-[#aaa] mr-[2px]" />Off
            </div>
          </div>
          <div className="flex items-center pl-[11px] h-[16px] mt-[10px] text-[12px]">
            <span className="w-[114px]">Keep all filters</span>
            <div className="h-[16px] w-[32px] rounded-full bg-[#2bab92] flex items-center justify-end pr-[3px] text-[9.500px] text-[#0e4a3e]">
              On<span className="h-[10px] w-[10px] rounded-full bg-[#222] ml-[2px]" />
            </div>
          </div>
          <div className="mt-[10px]"><DashBox black>Add drill-through fields here</DashBox></div>
        </div>

        {/* Data */}
        <div className="flex-1 flex flex-col">
          <div className="h-[38px] flex items-center justify-between pl-[8px] pr-[10px]">
            <span className="text-[15px] font-semibold tracking-[-0.1px]">Data</span>
            <Chevrons c="#f0f0f0" />
          </div>
          <div className="ml-[5px] mt-[7px] w-[171px] h-[24px] bg-[#1f1f1f] border border-[#777] rounded-[4px] flex items-center pl-[11px] text-[13px] text-[#aaa]">
            <svg viewBox="0 0 14 14" className="h-[14px] w-[14px]" fill="none" stroke="#bbb">
              <circle cx="6" cy="6" r="5" />
              <path d="M9.500 9.500L13 13" />
            </svg>
            <span className="ml-[7px]">Search</span>
          </div>
          <div className="flex items-center mt-[13px] h-[16px]">
            <svg viewBox="0 0 6 10" className="ml-[16px] h-[10px] w-[6px]" fill="none" stroke="#ddd" strokeWidth="1.300">
              <path d="M1 1l4 4-4 4" />
            </svg>
            <svg viewBox="0 0 12 12" className="ml-[9px] h-[12px] w-[12px]" fill="none" stroke="#e0e0e0">
              <rect x=".5" y=".5" width="11" height="11" rx="2" />
              <path d="M.5 4h11M.5 8h11M4 .5v11M8 .5v11" />
            </svg>
            <span className="ml-[4px] text-[11.500px] whitespace-nowrap font-semibold text-[#e8e8e8]">LITA SQL CUSTOMERD...</span>
          </div>
        </div>
      </div>

      {/* Status */}
      <div className="h-[25px] shrink-0 border-t border-[#5a5a5a] border-b border-b-black flex items-center text-[12px] pt-[1px]">
        <span className="ml-[4px] w-[60px] whitespace-nowrap text-[#e8e8e8]">Page 1 of 8</span>
        <div className="ml-[1091px] text-[14px] leading-none">-</div>
        <div className="ml-[4px] relative w-[100px] h-px bg-[#d0d0d0]">
          <div className="absolute left-[26px] -top-[6px] h-[13px] w-[4px] bg-[#c8c8c8]" />
          <div className="absolute left-[50px] -top-[2px] h-[5px] w-px bg-[#d0d0d0]" />
        </div>
        <div className="ml-[6px] text-[14px] leading-none">+</div>
        <span className="ml-[13px] text-[#e0e0e0]">60%</span>
        <svg viewBox="0 0 14 10" className="ml-[21px] h-[10px] w-[14px]" fill="none" stroke="#d0d0d0">
          <rect x=".5" y=".5" width="13" height="9" />
          <path d="M4 3H3v4h1M10 3h1v4h-1" />
        </svg>
      </div>

      {/* Taskbar */}
      <div className="h-[48px] shrink-0 bg-gradient-to-r from-[#e6f0f9] via-[#d3dcf0] to-[#e4f0fa] flex items-center relative text-[#1a1a1a]">
        <div className="ml-[508px] flex items-center">
          <div className="w-[44px] flex justify-center">
            <div className="grid grid-cols-2 gap-[1px] h-[24px] w-[24px]">
              <div className="bg-[#5cc4f5]" /><div className="bg-[#3aaef0]" /><div className="bg-[#1a92e8]" /><div className="bg-[#0c78dc]" />
            </div>
          </div>
          <div className="w-[44px] flex justify-center">
            <svg viewBox="0 0 22 24" className="h-[24px] w-[22px]" fill="none" stroke="#1a1a1a" strokeWidth="2.500">
              <circle cx="13" cy="9" r="7" />
              <path d="M8 15l-6 7" strokeWidth="3" />
            </svg>
          </div>
          <div className="w-[44px] flex justify-center">
            <svg viewBox="0 0 24 24" className="h-[24px] w-[24px]">
              <rect width="24" height="24" rx="2" fill="#1f2f3f" />
              <rect x="2.500" y="2.500" width="9" height="19" rx="1" fill="#e8e8e8" />
              <rect x="13" y="2.500" width="8.500" height="8" fill="#4fd0f0" />
              <rect x="13" y="12" width="8.500" height="4" fill="#1f90d8" />
              <rect x="13" y="17.500" width="8.500" height="4" fill="#1f70c0" />
            </svg>
          </div>
          <div className="w-[44px] flex justify-center">
            <svg viewBox="0 0 24 24" className="h-[24px] w-[24px]">
              <defs>
                <linearGradient id="ed" x1="0" y1="0" x2="1" y2="1"><stop offset="0" stopColor="#2fc4a0" /><stop offset="1" stopColor="#50d070" /></linearGradient>
              </defs>
              <circle cx="12" cy="12" r="12" fill="url(#ed)" />
              <path d="M1 12C1 5 7 0 13 0c6 0 10 4 10 9 0 2-2 3-5 3 0-4-3-6-6-6-5 0-8 4-8 8 0 6 6 10 11 10C7 25 1 19 1 12z" fill="#1878d0" />
              <path d="M8 14c0-4 3-6 6-5 2 1 3 3 2 4 2 1 4 1 7 0-1 6-6 10-11 10-2-2-4-5-4-9z" fill="#0e5fb0" />
            </svg>
          </div>
          <div className="w-[44px] flex justify-center">
            <svg viewBox="0 0 24 24" className="h-[24px] w-[24px]">
              <path d="M0 2h9l2 3h13v19H0z" fill="#e8a820" />
              <rect y="5" width="24" height="19" fill="#fbd75a" />
              <rect x="6" y="16" width="12" height="8" rx="1" fill="#2a80c8" />
            </svg>
          </div>
          <div className="w-[44px] flex justify-center">
            <svg viewBox="0 0 24 24" className="h-[24px] w-[24px]">
              <circle cx="12" cy="12" r="12" fill="#e8401f" />
              <text x="12" y="17" textAnchor="middle" fontSize="14" fontWeight="700" fill="#fff" fontFamily="Liberation Sans">W</text>
            </svg>
          </div>
          <div className="w-[44px] flex justify-center">
            <svg viewBox="0 0 24 24" className="h-[24px] w-[24px]">
              <path d="M8 6V3a4 4 0 0 1 8 0v3" fill="none" stroke="#2a80c8" strokeWidth="1.500" />
              <path d="M1 6h22v16a2 2 0 0 1-2 2H3a2 2 0 0 1-2-2z" fill="#1f4f80" />
              <rect x="8" y="9" width="3.500" height="3.500" fill="#e85030" />
              <rect x="12.500" y="9" width="3.500" height="3.500" fill="#5cb040" />
              <rect x="8" y="13.500" width="3.500" height="3.500" fill="#2a90e0" />
              <rect x="12.500" y="13.500" width="3.500" height="3.500" fill="#f0c020" />
            </svg>
          </div>
          <div className="ml-[4px] w-[36px] h-[40px] rounded-[4px] bg-[#f4f6fb] border border-[#e4e8f0] flex flex-col items-center pt-[6px] relative">
            <svg viewBox="0 0 22 24" className="h-[24px] w-[22px]">
              <rect x="0" y="14" width="9" height="10" rx="1" fill="#f5dc6a" />
              <rect x="6" y="7" width="9" height="17" rx="1" fill="#f0c92e" />
              <rect x="13" y="0" width="9" height="24" rx="1" fill="#e0a010" />
            </svg>
            <div className="absolute bottom-[1px] h-[3px] w-[16px] rounded bg-[#0a78d8]" />
          </div>
        </div>
        <div className="ml-[257px] flex items-center text-[12px] tracking-[-0.1px]">
          <svg viewBox="0 0 14 8" className="h-[8px] w-[13px]" fill="none" stroke="#222" strokeWidth="1.300"><path d="M1 7l6-6 6 6" /></svg>
          <svg viewBox="0 0 18 16" className="ml-[11px] h-[16px] w-[18px]"><path d="M3 11a4 4 0 0 1 1-8 5 5 0 0 1 9 1 4 4 0 0 1 3 6z" fill="#555" /><circle cx="12" cy="11" r="4.500" fill="#fff" /><path d="M9.500 11a2.500 2.500 0 0 1 4.500-1.500M14.500 11a2.500 2.500 0 0 1-4.500 1.500" stroke="#0a78d8" strokeWidth="1.200" fill="none" /></svg>
          <svg viewBox="0 0 16 10" className="ml-[5px] h-[10px] w-[15px]"><rect x=".5" y=".5" width="13" height="9" fill="none" stroke="#222" /><rect x="2" y="2" width="8" height="6" fill="#222" /><rect x="14" y="3" width="1.500" height="4" fill="#222" /></svg>
          <svg viewBox="0 0 18 14" className="ml-[7px] h-[14px] w-[17px]" fill="none" stroke="#222"><path d="M1 5h3l4-4v12L4 9H1zM11 4c1 2 1 4 0 6M13.500 2.500c2 3 2 6 0 9M16 1c2.500 4 2.500 8 0 12" /></svg>
          <div className="ml-[7px] w-[30px] text-center leading-[17px]">ENG<br />UK</div>
          <div className="ml-[13px] w-[62px] text-center leading-[16px] whitespace-nowrap">21:15<br />Thursday<br />14/11/2024</div>
          <div className="ml-[12px] relative h-[24px] w-[24px]">
            <svg viewBox="0 0 16 16" className="h-[16px] w-[16px] absolute left-[1px] top-0"><path d="M0 0h16v12H5l-3 3v-3H0z" fill="#111" /><path d="M3 3h10M3 6h10M3 9h7" stroke="#fff" /></svg>
            <div className="absolute left-[8px] top-[8px] h-[16px] w-[16px] rounded-full bg-[#cfcfcf] border border-[#888] text-[10px] font-bold leading-[14px] text-center text-[#222]">1</div>
          </div>
        </div>
      </div>
    </div>
  );
}
